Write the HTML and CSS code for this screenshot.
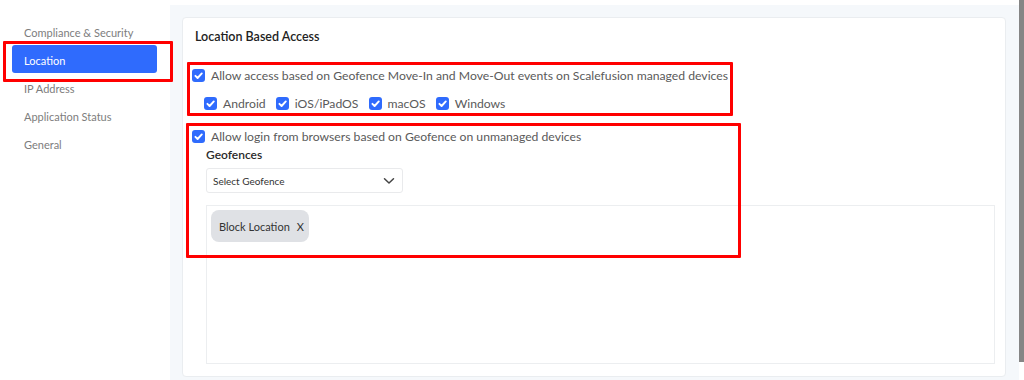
FILE: index.html
```html
<!DOCTYPE html>
<html>
<head>
<meta charset="utf-8">
<link rel="stylesheet" href="styles.css">
</head>
<body>
<div class="sidebar">
  <div class="nav-item">Compliance &amp; Security</div>
  <div class="nav-item active">Location</div>
  <div class="nav-item">IP Address</div>
  <div class="nav-item">Application Status</div>
  <div class="nav-item">General</div>
</div>
<div class="main">
  <div class="card">
    <div class="title">Location Based Access</div>

    <label class="row row-first">
      <span class="cb"><svg viewBox="0 0 13 13" width="13" height="13"><polyline points="3.4,6.8 5.6,9 9.8,4.4" fill="none" stroke="#fff" stroke-width="1.9" stroke-linecap="round" stroke-linejoin="round"/></svg></span>
      <span class="label">Allow access based on Geofence Move-In and Move-Out events on Scalefusion managed devices</span>
    </label>
    <div class="row row-os">
      <label class="os"><span class="cb"><svg viewBox="0 0 13 13" width="13" height="13"><polyline points="3.4,6.8 5.6,9 9.8,4.4" fill="none" stroke="#fff" stroke-width="1.9" stroke-linecap="round" stroke-linejoin="round"/></svg></span><span class="label">Android</span></label>
      <label class="os"><span class="cb"><svg viewBox="0 0 13 13" width="13" height="13"><polyline points="3.4,6.8 5.6,9 9.8,4.4" fill="none" stroke="#fff" stroke-width="1.9" stroke-linecap="round" stroke-linejoin="round"/></svg></span><span class="label">iOS/iPadOS</span></label>
      <label class="os"><span class="cb"><svg viewBox="0 0 13 13" width="13" height="13"><polyline points="3.4,6.8 5.6,9 9.8,4.4" fill="none" stroke="#fff" stroke-width="1.9" stroke-linecap="round" stroke-linejoin="round"/></svg></span><span class="label">macOS</span></label>
      <label class="os"><span class="cb"><svg viewBox="0 0 13 13" width="13" height="13"><polyline points="3.4,6.8 5.6,9 9.8,4.4" fill="none" stroke="#fff" stroke-width="1.9" stroke-linecap="round" stroke-linejoin="round"/></svg></span><span class="label">Windows</span></label>
    </div>

    <label class="row row-browser">
      <span class="cb"><svg viewBox="0 0 13 13" width="13" height="13"><polyline points="3.4,6.8 5.6,9 9.8,4.4" fill="none" stroke="#fff" stroke-width="1.9" stroke-linecap="round" stroke-linejoin="round"/></svg></span>
      <span class="label">Allow login from browsers based on Geofence on unmanaged devices</span>
    </label>

    <div class="geo">
      <div class="geo-label">Geofences</div>
      <div class="select">
        <span>Select Geofence</span>
        <svg class="chev" viewBox="0 0 12 8" width="12" height="8"><polyline points="1.5,1.8 6,6 10.5,1.8" fill="none" stroke="#444" stroke-width="1.5" stroke-linecap="round" stroke-linejoin="round"/></svg>
      </div>
      <div class="chips">
        <span class="chip">Block Location<span class="chip-x">X</span></span>
      </div>
    </div>

    <div class="mark mark-1"></div>
    <div class="mark mark-2"></div>
  </div>
</div>
<div class="scrollbar"></div>
</body>
</html>
```

FILE: styles.css
```css
* { box-sizing: border-box; }

html, body {
  margin: 0;
  padding: 0;
  height: 380px;
  overflow: hidden;
  background: #fff;
  font-family: "Lato", "Noto Sans", sans-serif;
}

body {
  display: flex;
  align-items: flex-start;
}

/* Sidebar */
.sidebar {
  width: 170px;
  flex: none;
  padding: 19px 0 0 12px;
}

.nav-item {
  width: 145px;
  height: 28px;
  padding: 0 12px;
  font-size: 11px;
  line-height: 28px;
  color: #7d7d7d;
}

.nav-item:first-child {
  height: 26px;
  line-height: 28px;
}

.nav-item.active {
  position: relative;
  background: #2f6bfd;
  color: #fff;
  border-radius: 3px;
  line-height: 32px;
  margin-bottom: 2px;
}

.nav-item.active::after {
  content: "";
  position: absolute;
  left: -9px;
  top: -4px;
  width: 164px;
  height: 35px;
  border: 3px solid #f00;
  border-radius: 1px;
}

/* Main */
.main {
  flex: 1;
  margin-top: 5px;
  height: 375px;
  background: #f5f8fb;
  padding: 12px 13px 0 12px;
}

.card {
  position: relative;
  height: 360px;
  background: #fff;
  border: 1px solid #eaedf0;
  border-radius: 4px;
  padding: 10px 10px 0 9px;
}

.title {
  padding-left: 3px;
  font-size: 12.5px;
  line-height: 18px;
  font-weight: 600;
  color: #222;
}

.row {
  display: flex;
  align-items: center;
  height: 20px;
}

.row-first { margin-top: 19px; }
.row-os { margin-top: 8px; padding-left: 12px; gap: 10px; }
.row-browser { margin-top: 13px; }

.os {
  display: flex;
  align-items: center;
}

.cb {
  width: 13px;
  height: 13px;
  flex: none;
  border-radius: 3px;
  background: #2f6bfd;
  display: flex;
}

.label {
  margin-left: 6px;
  font-size: 12.2px;
  color: #5a5a5a;
  white-space: nowrap;
}

.os .label { margin-left: 6px; }

.geo {
  padding-left: 14px;
}

.geo-label {
  font-size: 12px;
  line-height: 18px;
  font-weight: 600;
  color: #2a2a2a;
}

.select {
  margin-top: 4px;
  width: 197px;
  height: 25px;
  border: 1px solid #e9eaec;
  border-radius: 3px;
  display: flex;
  align-items: center;
  justify-content: space-between;
  padding: 0 6px 0 6px;
  font-size: 10px;
  color: #333;
}

.chev { margin-right: 1px; }

.chips {
  margin-top: 12px;
  height: 159px;
  border: 1px solid #eceef0;
  padding: 4px;
}

.chip {
  display: inline-flex;
  align-items: center;
  height: 32px;
  width: 98px;
  padding: 0 0 0 8px;
  background: #dfe1e5;
  border-radius: 8px;
  font-size: 11px;
  color: #333;
}

.chip-x { margin-left: 7px; }

/* annotation boxes */
.mark {
  position: absolute;
  border: 3px solid #f00;
  border-radius: 1px;
}

.mark-1 { left: 4px; top: 44px; width: 546px; height: 54px; }
.mark-2 { left: 3px; top: 105px; width: 555px; height: 135px; }

.scrollbar {
  width: 5px;
  height: 362px;
  flex: none;
  background: #858585;
}
```
